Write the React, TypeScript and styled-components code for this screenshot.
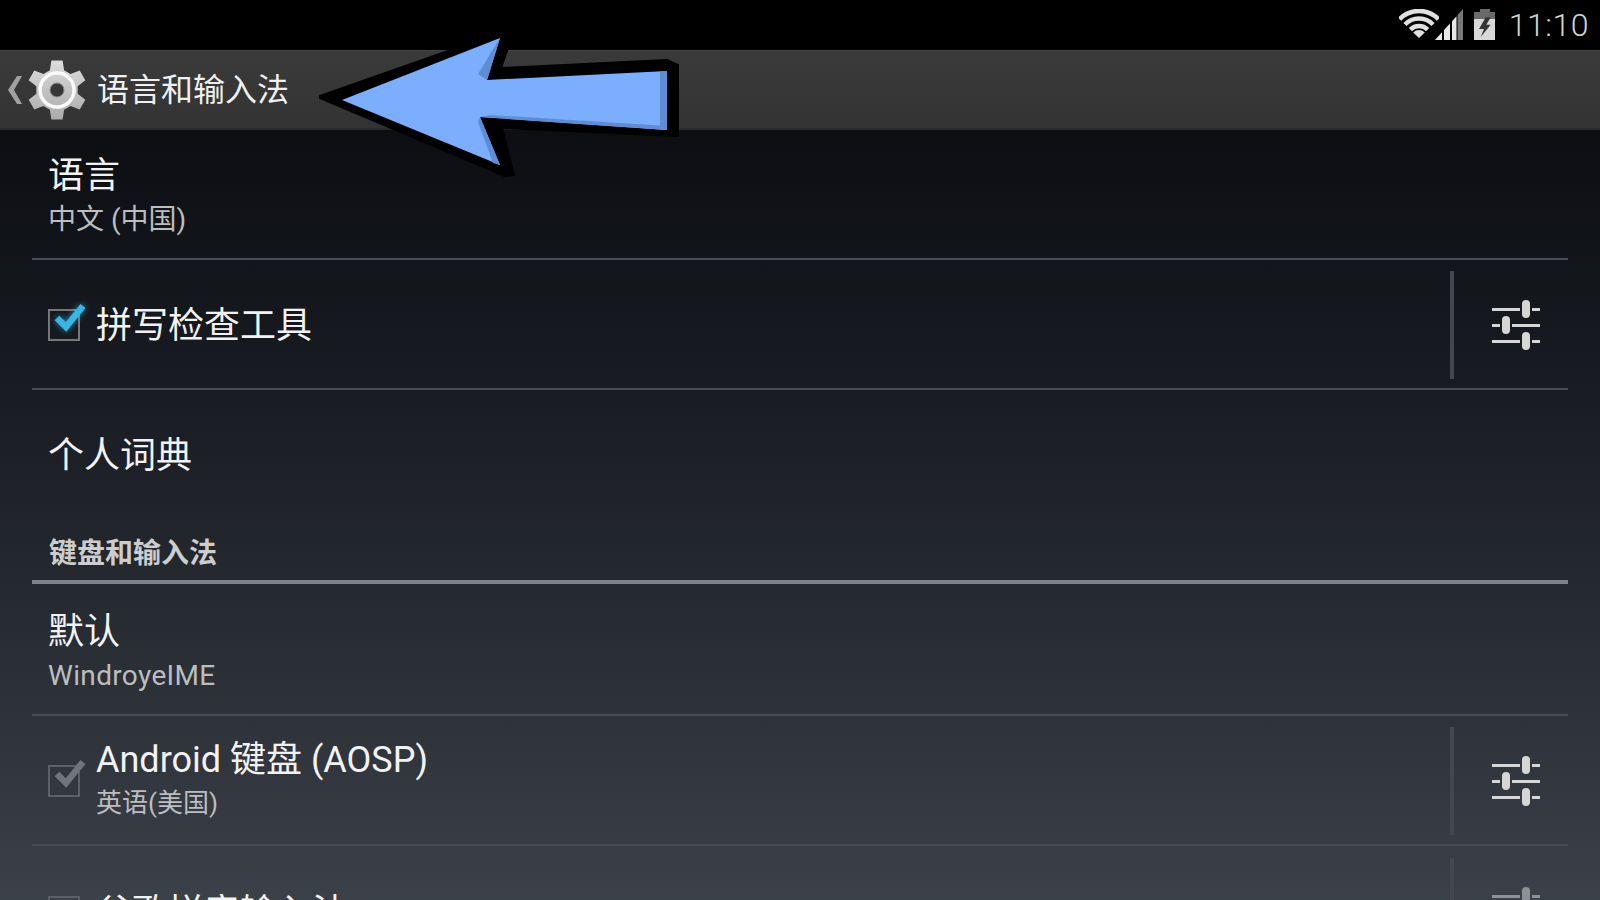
import React from "react";
import styled, { createGlobalStyle } from "styled-components";

const uiFont = `Roboto, "Noto Sans CJK SC", sans-serif`;

const GlobalStyle = createGlobalStyle`
  html, body {
    margin: 0;
    padding: 0;
    background: #000;
  }
`;

const gearPath = (() => {
  const cx = 30;
  const cy = 30;
  const teeth = 6;
  const pts: string[] = [];
  for (let i = 0; i < teeth; i++) {
    const a = (i * Math.PI * 2) / teeth - Math.PI / 2;
    const step = Math.PI / 6;
    const add = (r: number, t: number) =>
      pts.push(`${(cx + r * Math.cos(t)).toFixed(2)} ${(cy + r * Math.sin(t)).toFixed(2)}`);
    add(21, a - step * 0.66);
    add(30, a - step * 0.36);
    add(30, a + step * 0.36);
    add(21, a + step * 0.66);
  }
  return `M${pts.join("L")}Z`;
})();

const BackChevron = () => (
  <ChevronSvg viewBox="0 0 14 28">
    <path d="M9 0h5L6 14l8 14H9L0 14z" fill="#a0a0a0" />
  </ChevronSvg>
);

const GearIcon = () => (
  <GearSvg viewBox="0 0 60 60">
    <defs>
      <linearGradient id="gearFill" x1="0" y1="0" x2="0" y2="1">
        <stop offset="0" stopColor="#dcdcdc" />
        <stop offset="1" stopColor="#ababab" />
      </linearGradient>
    </defs>
    <path d={gearPath} fill="url(#gearFill)" />
    <circle cx="30" cy="30" r="17" fill="none" stroke="#fafafa" strokeWidth="3.5" />
    <circle cx="30" cy="30" r="7" fill="#363636" stroke="#8a8a8a" strokeWidth="1" />
  </GearSvg>
);

const WifiIcon = () => (
  <WifiSvg viewBox="0 0 40 30">
    <g fill="none" stroke="#e0e0e0" strokeWidth="4.5">
      <path d="M0.56 10.2A27 27 0 0 1 39.44 10.2" />
      <path d="M5.96 15.45A19.5 19.5 0 0 1 34.04 15.45" />
      <path d="M11.36 20.66A12 12 0 0 1 28.64 20.66" />
    </g>
    <path d="M20 29L14.2 23.4A8 8 0 0 1 25.8 23.4Z" fill="#e0e0e0" />
  </WifiSvg>
);

const SignalIcon = () => (
  <SignalSvg viewBox="0 0 28 31">
    <path d="M0 31L7 23.25V31z" fill="#e8e8e8" />
    <path d="M9 21L15 14.4V31H9z" fill="#e8e8e8" />
    <path d="M17 12.2L21.5 7.2V31H17z" fill="#e8e8e8" />
    <path d="M22.5 6.1L28 0V31H22.5z" fill="#777" />
  </SignalSvg>
);

const BatteryIcon = () => (
  <BatterySvg viewBox="0 0 21 31">
    <rect x="6" y="0" width="10" height="3" fill="#6a6a6a" />
    <rect x="0" y="3" width="21" height="7" fill="#6a6a6a" />
    <rect x="0" y="10" width="21" height="21" fill="#d8d8d8" />
    <path d="M11.7 8.300L5 20H10L6.700 28L16.700 15.700H12.300L16.700 8.300z" fill="#333" />
  </BatterySvg>
);

const TuneIcon = ({ dim }: { dim?: boolean }) => {
  const c = dim ? "#8d9196" : "#d6d6d6";
  return (
    <TuneSvg viewBox="0 0 48 50">
      <g fill={c}>
        <rect x="0" y="8" width="28" height="3" />
        <rect x="40" y="8" width="8" height="3" />
        <rect x="30" y="0" width="8" height="18" rx="4" />
        <rect x="0" y="24" width="8" height="3" />
        <rect x="20" y="24" width="28" height="3" />
        <rect x="10" y="16" width="8" height="18" rx="4" />
        <rect x="0" y="40" width="28" height="3" />
        <rect x="40" y="40" width="8" height="3" />
        <rect x="30" y="32" width="8" height="18" rx="4" />
      </g>
    </TuneSvg>
  );
};

type CheckState = "on" | "grey" | "off";

const CheckMark = ({ state }: { state: CheckState }) => (
  <CheckBox $on={state === "on"}>
    {state !== "off" && (
      <CheckSvg viewBox="0 0 36 32" $on={state === "on"}>
        <path
          d="M6 17l9 9L32 5"
          fill="none"
          stroke={state === "on" ? "#35b6e5" : "#70757b"}
          strokeWidth="6.500"
        />
      </CheckSvg>
    )}
  </CheckBox>
);

const BigArrow = () => (
  <ArrowSvg viewBox="0 0 400 150">
    <path
      d="M20 66L202 2L208 18L201 38L367 30L378 35V106L202 98L214 145L205 146L20 68Z"
      fill="#000"
      stroke="#000"
      strokeWidth="2"
      strokeLinejoin="round"
    />
    <path d="M42 70L200 8L187 50L367 41V100L180 87L200 135Z" fill="#7baeff" />
    <path d="M200 8L187 50L178 44Z" fill="#5d8ed4" />
    <path d="M180 87L200 135L193 133L178 92Z" fill="#5d8ed4" />
    <path d="M180 87L367 100V96L190 85Z" fill="#5d8ed4" />
    <path d="M360 41.500L367 41V100L360 99.500Z" fill="#5d8ed4" />
  </ArrowSvg>
);

const App = () => (
  <Screen>
    <GlobalStyle />
    <StatusBar>
      <WifiIcon />
      <SignalIcon />
      <BatteryIcon />
      <Clock>11:10</Clock>
    </StatusBar>
    <ActionBar>
      <BackChevron />
      <GearIcon />
      <ActionTitle>语言和输入法</ActionTitle>
    </ActionBar>
    <BigArrow />
    <List>
      <TextRow>
        <TextBlock>
          <Title>语言</Title>
          <Summary>中文 (中国)</Summary>
        </TextBlock>
      </TextRow>
      <Row>
        <CheckMark state="on" />
        <SingleTitle>拼写检查工具</SingleTitle>
        <SettingsSlot>
          <TuneIcon />
        </SettingsSlot>
      </Row>
      <PlainRow>
        <SingleTitle>个人词典</SingleTitle>
      </PlainRow>
      <GroupHeader>键盘和输入法</GroupHeader>
      <DefaultRow>
        <TextBlock>
          <Title>默认</Title>
          <Summary $spaced>WindroyeIME</Summary>
        </TextBlock>
      </DefaultRow>
      <Row>
        <CheckMark state="grey" />
        <TextBlock>
          <Title>Android 键盘 (AOSP)</Title>
          <Summary $small>英语(美国)</Summary>
        </TextBlock>
        <SettingsSlot>
          <TuneIcon />
        </SettingsSlot>
      </Row>
      <LastRow>
        <CheckMark state="off" />
        <SingleTitle>谷歌拼音输入法</SingleTitle>
        <SettingsSlot>
          <TuneIcon dim />
        </SettingsSlot>
      </LastRow>
    </List>
  </Screen>
);

const Screen = styled.div`
  position: relative;
  display: flex;
  flex-direction: column;
  width: 1600px;
  height: 900px;
  overflow: hidden;
  font-family: ${uiFont};
  background: linear-gradient(180deg, #0c0e12 130px, #181b21 380px, #272b32 620px, #3b4149 900px);
`;

const StatusBar = styled.div`
  display: flex;
  align-items: center;
  justify-content: flex-end;
  flex: 0 0 50px;
  padding-right: 11px;
  box-sizing: border-box;
  background: #000;
`;

const WifiSvg = styled.svg`
  width: 40px;
  height: 30px;
  margin-top: -3px;
`;

const SignalSvg = styled.svg`
  width: 28px;
  height: 31px;
  margin-left: -4px;
  margin-top: -2px;
`;

const BatterySvg = styled.svg`
  width: 21px;
  height: 31px;
  margin-left: 11px;
  margin-top: -2px;
`;

const Clock = styled.div`
  margin-left: 14px;
  color: #d4d4d4;
  font-size: 32px;
  font-weight: 300;
  letter-spacing: 0.5px;
`;

const ActionBar = styled.div`
  display: flex;
  align-items: center;
  flex: 0 0 80px;
  padding-left: 8px;
  box-sizing: border-box;
  border-top: 1px solid #454545;
  background: linear-gradient(180deg, #3a3a3a, #333);
  border-bottom: 2px solid #2a2a2a;
`;

const ChevronSvg = styled.svg`
  width: 14px;
  height: 28px;
`;

const GearSvg = styled.svg`
  width: 60px;
  height: 60px;
  margin-left: 5px;
`;

const ActionTitle = styled.div`
  margin-left: 10px;
  padding-bottom: 6px;
  color: #f0f0f0;
  font-size: 32px;
`;

const ArrowSvg = styled.svg`
  position: absolute;
  left: 300px;
  top: 30px;
  width: 400px;
  height: 150px;
`;

const List = styled.div`
  display: flex;
  flex-direction: column;
  flex: 1;
  margin: 0 32px;
`;

const Row = styled.div`
  display: flex;
  align-items: center;
  flex: 0 0 130px;
  padding: 2px 0 0 16px;
  box-sizing: border-box;
  border-bottom: 2px solid #4a4e54;
`;

const TextRow = styled(Row)`
  padding-top: 7px;
`;

const DefaultRow = styled(TextRow)`
  flex-basis: 132px;
  padding-top: 9px;
`;

const PlainRow = styled(Row)`
  flex-basis: 128px;
  border-bottom: 0;
`;

const LastRow = styled(Row)`
  border-bottom: 0;
`;

const TextBlock = styled.div`
  display: flex;
  flex-direction: column;
`;

const Title = styled.div`
  color: #f2f2f2;
  font-size: 36px;
  line-height: 44px;
`;

const SingleTitle = styled(Title)`
  padding-top: 2px;
`;

const Summary = styled.div<{ $small?: boolean; $spaced?: boolean }>`
  color: #bcbdbf;
  font-size: ${(p) => (p.$small ? "26px" : "28px")};
  line-height: 43px;
  letter-spacing: ${(p) => (p.$spaced ? "0.35px" : "0")};
`;

const GroupHeader = styled.div`
  display: flex;
  align-items: flex-end;
  flex: 0 0 66px;
  padding: 0 0 9px 17px;
  box-sizing: border-box;
  color: #cdcdcd;
  font-size: 28px;
  font-weight: 700;
  border-bottom: 4px solid #7f8388;
`;

const CheckBox = styled.div<{ $on: boolean }>`
  position: relative;
  flex: none;
  width: 32px;
  height: 32px;
  margin-right: 16px;
  box-sizing: border-box;
  border: 2px solid ${(p) => (p.$on ? "#777" : "#5c6167")};
`;

const CheckSvg = styled.svg<{ $on: boolean }>`
  position: absolute;
  left: 1px;
  top: -10px;
  width: 36px;
  height: 32px;
  ${(p) => (p.$on ? "filter: drop-shadow(0 0 3px rgba(53, 182, 229, 0.7));" : "")}
`;

const SettingsSlot = styled.div`
  display: flex;
  align-items: center;
  align-self: center;
  width: 118px;
  height: 108px;
  margin-left: auto;
  padding-left: 38px;
  box-sizing: border-box;
  border-left: 4px solid #44484e;
`;

const TuneSvg = styled.svg`
  width: 48px;
  height: 50px;
`;

export default App;
